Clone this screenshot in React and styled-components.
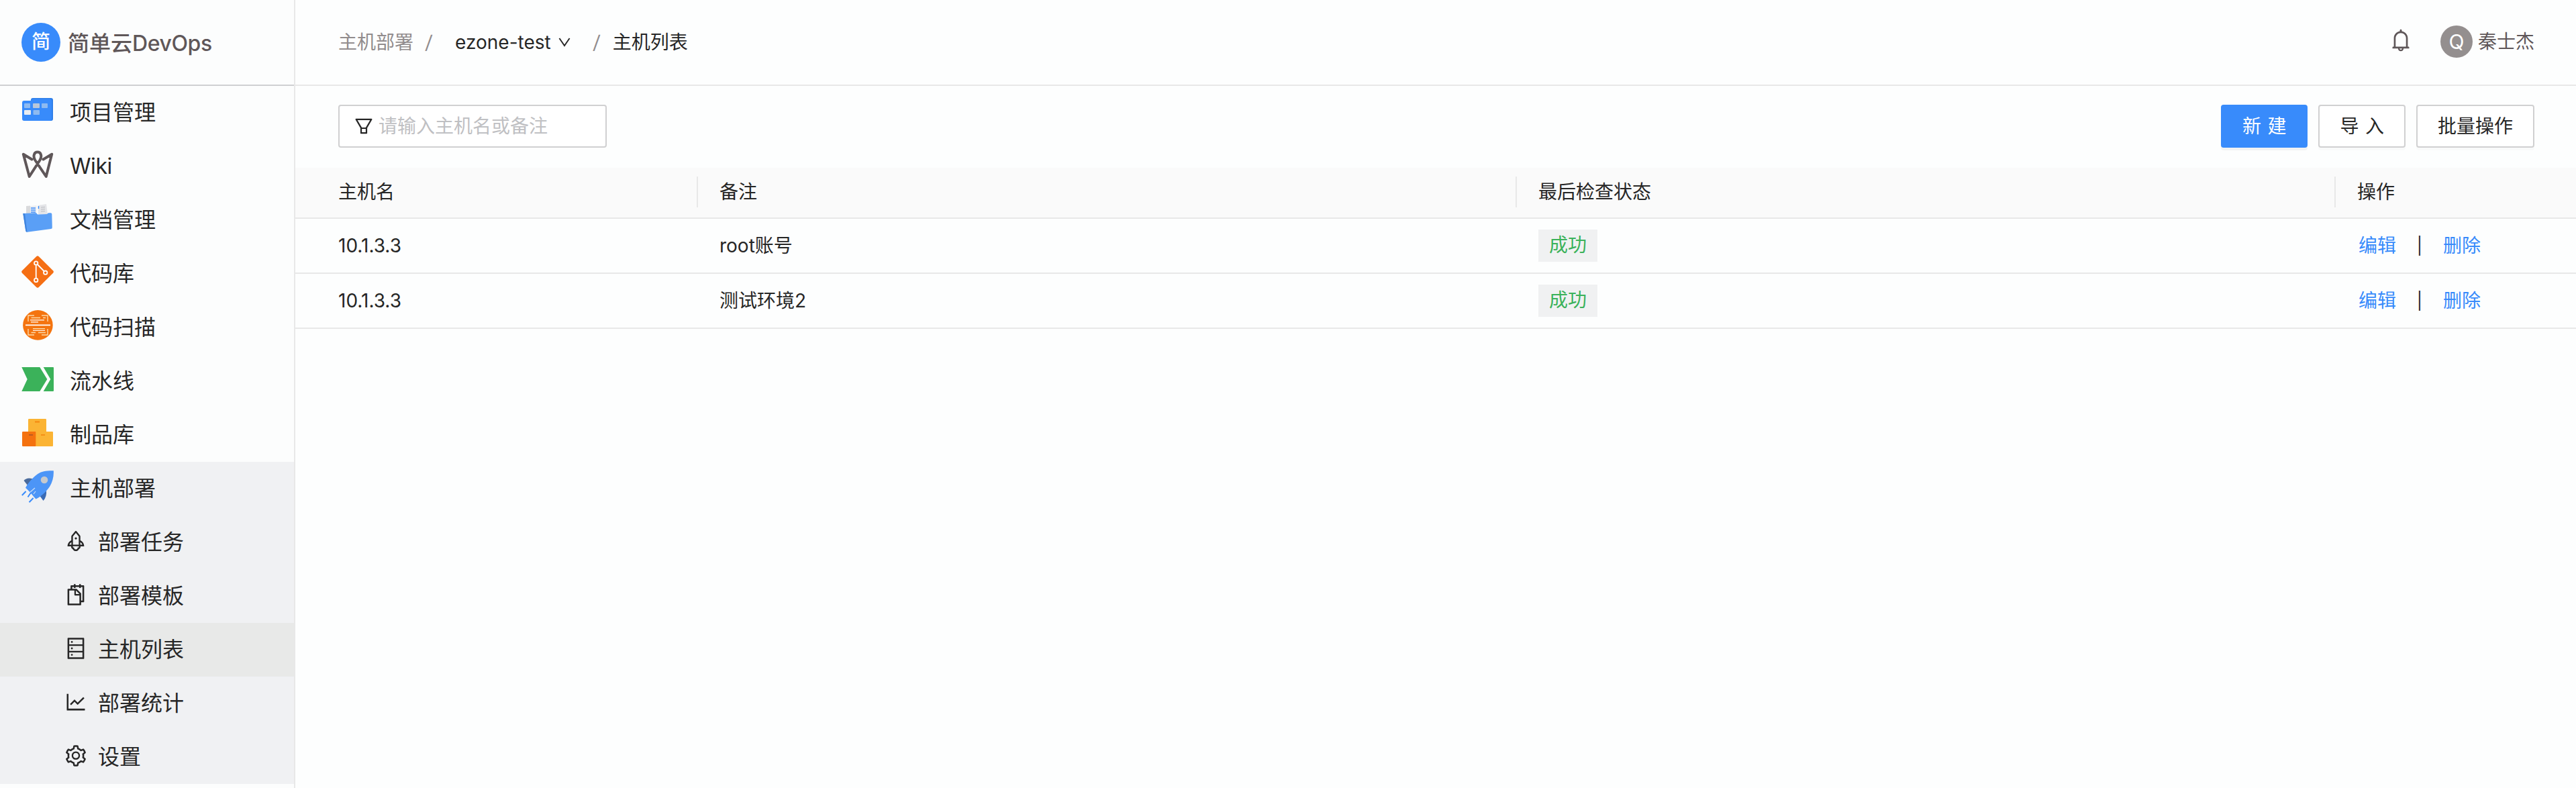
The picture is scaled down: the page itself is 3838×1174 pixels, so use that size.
import React from "react";
import styled, { createGlobalStyle, css } from "styled-components";
import {
  AiOutlineBell,
  AiOutlineDatabase,
  AiOutlineFilter,
  AiOutlineLineChart,
  AiOutlineRocket,
  AiOutlineSetting,
  AiOutlineSnippets,
} from "react-icons/ai";

const color = {
  primary: "#388bfb",
  text: "#262626",
  brown: "#5f5759",
  muted: "#918c8d",
  placeholder: "#bfc0c3",
  line: "#e8e8e8",
  control: "#d0d0d1",
  green: "#3bb25a",
};

const GlobalStyle = createGlobalStyle`
  * { box-sizing: border-box; }
  body {
    margin: 0;
    background: #fdfefe;
    color: ${color.text};
    font-family: Inter, "Noto Sans CJK SC", sans-serif;
    font-size: 28px;
    line-height: 44px;
  }
  svg { display: block; flex: none; }
`;

const Page = styled.div`
  display: grid;
  grid-template-columns: 440px 1fr;
  height: 1174px;
  overflow: hidden;
`;

const Sidebar = styled.aside`
  background: #fcfdfd;
  border-right: 2px solid ${color.line};
`;

const Brand = styled.div`
  height: 128px;
  display: flex;
  align-items: center;
  gap: 11px;
  padding-left: 32px;
  border-bottom: 2px solid #cfcfd2;
`;

const BrandMark = styled.div`
  width: 58px;
  height: 58px;
  border-radius: 50%;
  background: ${color.primary};
  color: #fff;
  font-size: 28px;
  font-weight: 500;
  line-height: 56px;
  text-align: center;
`;

const BrandName = styled.div`
  color: ${color.brown};
  font-size: 32px;
  font-weight: 500;
  padding-top: 4px;
`;

const Latin = styled.span`
  letter-spacing: -0.013em;
`;

const NavItem = styled.div`
  height: 80px;
  display: flex;
  align-items: center;
  gap: 24px;
  padding-left: 32px;
  font-size: 32px;

  svg { margin-bottom: 6px; }
`;

const NavGroup = styled.div`
  background: #f0f1f3;
`;

const SubItem = styled.div`
  height: 80px;
  display: flex;
  align-items: center;
  gap: 15px;
  padding-left: 95px;
  font-size: 32px;
  background: ${(p) => (p.$active ? "#e8e9e8" : "transparent")};

  svg { margin-bottom: 4px; }
`;

const Main = styled.main`
  min-width: 0;
`;

const TopBar = styled.header`
  height: 128px;
  display: flex;
  align-items: center;
  justify-content: space-between;
  padding: 0 62px 2px 64px;
  border-bottom: 2px solid ${color.line};
`;

const Crumbs = styled.nav`
  display: flex;
  align-items: center;
  padding-top: 2px;
`;

const Crumb = styled.span`
  color: ${(p) => (p.$muted ? color.muted : color.text)};
`;

const Slash = styled.span`
  width: 14px;
  margin: 0 ${(p) => p.$after}px 0 16px;
  color: ${color.muted};
  text-align: center;
  transform: skewX(-5deg);
`;

const Picker = styled.span`
  display: flex;
  align-items: center;
  gap: 11px;
  padding-right: 16px;
`;

const Account = styled.div`
  display: flex;
  align-items: center;
  color: ${color.brown};
`;

const BellIcon = styled(AiOutlineBell)`
  margin-bottom: 4px;
`;

const Avatar = styled.div`
  width: 48px;
  height: 48px;
  margin: 0 8px 0 40px;
  border-radius: 50%;
  background: #948f8f;
  color: #fff;
  font-size: 30px;
  line-height: 48px;
  text-align: center;
`;

const Toolbar = styled.div`
  height: 122px;
  display: flex;
  align-items: center;
  justify-content: space-between;
  padding: 0 62px 2px 64px;
`;

const Search = styled.div`
  width: 400px;
  height: 64px;
  display: flex;
  align-items: center;
  gap: 6px;
  padding-left: 20px;
  border: 2px solid ${color.control};
  border-radius: 4px;
  background: #fff;
`;

const Placeholder = styled.span`
  color: ${color.placeholder};
`;

const Actions = styled.div`
  display: flex;
  gap: 16px;
`;

const Button = styled.button`
  height: 64px;
  padding: 0 30px;
  border: 2px solid ${color.control};
  border-radius: 4px;
  background: #fff;
  color: ${color.text};
  font: inherit;
  white-space: nowrap;
  box-shadow: 0 4px 0 rgba(0, 0, 0, 0.016);

  span {
    letter-spacing: ${(p) => (p.$spaced ? "0.34em" : "0")};
    margin-right: ${(p) => (p.$spaced ? "-0.34em" : "0")};
  }

  ${(p) =>
    p.$primary &&
    css`
      border-color: ${color.primary};
      background: ${color.primary};
      color: #fff;
      box-shadow: 0 4px 0 rgba(0, 0, 0, 0.045);
    `}
`;

const ROW = css`
  display: grid;
  grid-template-columns: 600px 1220px 1220px 1fr;
  align-items: center;
  border-bottom: 2px solid ${color.line};
`;

const HeadRow = styled.div`
  ${ROW}
  height: 76px;
  background: #fafafa;
`;

const HeadCell = styled.div`
  height: 46px;
  line-height: 46px;
  margin-bottom: 2px;
  padding-left: ${(p) => (p.$first ? 64 : 32)}px;
  border-right: ${(p) => (p.$last ? "0" : "2px")} solid ${color.line};
`;

const Row = styled.div`
  ${ROW}
  height: 82px;
`;

const Cell = styled.div`
  display: flex;
  align-items: center;
  padding-left: ${(p) => (p.$first ? 64 : p.$links ? 34 : 32)}px;
`;

const Tag = styled.span`
  height: 48px;
  padding: 0 16px;
  line-height: 46px;
  background: #f0f1f2;
  color: ${color.green};
`;

const Link = styled.a`
  color: ${color.primary};
`;

const Bar = styled.span`
  width: 70px;
  font-size: 25px;
  text-align: center;
`;

const ChevronIcon = () => (
  <svg width="18" height="14" viewBox="0 0 18 14" fill="none" stroke={color.text} strokeWidth="1.9">
    <path d="M1.4 1L9 12L16.6 1" />
  </svg>
);

const ProjectIcon = () => (
  <svg width="48" height="48" viewBox="0 0 48 48">
    <rect x="14" y="5" width="33" height="34" rx="3" fill="#2f7fe8" />
    <path d="M4 9H13Q14.5 9 15.5 7.8Q16.5 6.6 18 6.6H42Q45 6.6 45 9.6V36Q45 39 42 39H4Q1 39 1 36V12Q1 9 4 9Z" fill="#388bfb" />
    <rect x="4" y="13" width="9" height="7" rx="1" fill="#8ebaf0" />
    <rect x="17" y="13" width="10" height="7" rx="1" fill="#b9c7d9" />
    <rect x="30" y="13" width="9" height="7" rx="1" fill="#8ebaf0" />
    <rect x="4" y="23" width="10" height="7" rx="1" fill="#e9edf1" />
    <rect x="17.5" y="23" width="9.5" height="7" rx="1" fill="#8ebaf0" />
  </svg>
);

const WikiIcon = () => (
  <svg width="48" height="48" viewBox="0 0 48 48" fill="none" stroke={color.brown} strokeWidth="4" strokeLinecap="round" strokeLinejoin="round">
    <path d="M15.5 16.5L2.8 8.8L11.7 42L27.5 17.5C31 11.5 29 5.6 23.9 5.6C18.8 5.6 16.8 11.5 20.2 17.5L36.7 42L45.2 8.8L32.4 16.5" />
  </svg>
);

const DocsIcon = () => (
  <svg width="48" height="48" viewBox="0 0 48 48">
    <path d="M7 6L13 5.5V18H7Z" fill="#d9dadc" />
    <path d="M13 6L22.5 5V18H13Z" fill="#eceef1" />
    <path d="M24.5 5L37 3L39 18H25Z" fill="#e4e5e8" />
    <path d="M14 9H21M14 12H21M14 15H21M25.5 6V10" stroke="#388bfb" strokeWidth="1.4" />
    <path d="M29 8L35 7.5M29 11L35 10.5M29 14L35 13.5" stroke="#b9bbc0" strokeWidth="1" />
    <path d="M2.3 17L22 16.3L24 18.5L38 18L40 16.3H43.5Q45.3 16.3 45.3 18L45.8 38Q45.8 39.8 44 40L8.5 44.7Q6.6 44.8 6.3 43Z" fill="#5a9ff6" />
    <path d="M2.3 17L5 17L8.5 44.7Q6.6 44.8 6.3 43Z" fill="#3f84dd" />
  </svg>
);

const RepoIcon = () => (
  <svg width="48" height="48" viewBox="0 0 48 48">
    <path d="M22.3 .9Q24 -.6 25.7 .9L47.1 22.3Q48.6 24 47.1 25.7L25.7 47.1Q24 48.6 22.3 47.1L.9 25.7Q-.6 24 .9 22.3Z" fill="#f56f14" />
    <g fill="none" stroke="#fff" strokeWidth="1.8">
      <path d="M21.7 14V33.5M23.8 13L33.6 23" />
      <circle cx="21.7" cy="11" r="2.7" />
      <circle cx="35.7" cy="25.2" r="2.7" />
      <circle cx="21.7" cy="36.4" r="2.7" />
    </g>
  </svg>
);

const ScanIcon = () => (
  <svg width="48" height="48" viewBox="0 0 48 48">
    <circle cx="24.4" cy="23.4" r="22.3" fill="#f4740f" />
    <g fill="none" stroke="#fbd9a8" strokeWidth="1.4">
      <path d="M19 9H10V18M30 9H39V18M10 29V38H19M39 29V38H30" />
      <path d="M14.5 12.5H28M32 12.5H36M17 28.8H35M14.5 34.5H21M25 34.5H36" />
    </g>
    <path d="M13 15.8H34M14 18.8H25M17 31.5H35" stroke="#fff" strokeWidth="1.2" />
    <path d="M6 23.4H43" stroke="#fff" strokeWidth="1.8" />
  </svg>
);

const PipelineIcon = () => (
  <svg width="48" height="48" viewBox="0 0 48 48" fill="#3bb25a">
    <path d="M.3 6H27.3L38.3 24L27.3 42H.3L8.7 24Z" />
    <path d="M32.7 6H47Q48 6 48 7V41Q48 42 47 42H32.7L43.3 24Z" />
  </svg>
);

const ArtifactIcon = () => (
  <svg width="48" height="48" viewBox="0 0 48 48">
    <rect x="10" y="3" width="27" height="20" rx="1.2" fill="#fbb434" />
    <rect x="1" y="22" width="21" height="22" rx="1.2" fill="#f4720f" />
    <path d="M21.3 22H46Q47 22 47 23V43Q47 44 46 44H21.3Z" fill="#fbb434" />
    <path d="M20 7.5H27" stroke="#f4870f" strokeWidth="2" />
    <path d="M29 27H35" stroke="#f4870f" strokeWidth="1.6" />
    <path d="M11 27H17" stroke="#a3542a" strokeWidth="1.4" />
  </svg>
);

const DeployIcon = () => (
  <svg width="48" height="48" viewBox="0 0 48 48">
    <path d="M17 12.5Q8 9.5 3.5 15L9 22Z" fill="#4a6b9c" />
    <path d="M37 30Q38 39 32.5 45L27.5 38Z" fill="#3a6bb5" />
    <path d="M47.8 .2C38 0 30 .8 24 5.2C17 10.5 10 18 6 25.7C8.5 28 11 30 13 33C16 36 18.5 39.5 21.5 42.5C29 39 37 31.5 42 24C46.5 16.5 48.3 9 47.8 .2Z" fill="#4c95f7" />
    <circle cx="34" cy="14" r="5.3" fill="#c6c9cd" />
    <path d="M12 33L20 26M18 35L21 31" stroke="#cfe0f7" strokeWidth="1.2" />
    <path d="M6.6 31L.8 37M14 33L9.5 39.5M17.6 41L11.5 47.2" stroke={color.primary} strokeWidth="2" />
  </svg>
);

const NAV = [
  ["项目管理", ProjectIcon],
  ["Wiki", WikiIcon],
  ["文档管理", DocsIcon],
  ["代码库", RepoIcon],
  ["代码扫描", ScanIcon],
  ["流水线", PipelineIcon],
  ["制品库", ArtifactIcon],
];

const SUB_NAV = [
  ["部署任务", AiOutlineRocket],
  ["部署模板", AiOutlineSnippets],
  ["主机列表", AiOutlineDatabase],
  ["部署统计", AiOutlineLineChart],
  ["设置", AiOutlineSetting],
];

const HOSTS = [
  { id: 1, host: "10.1.3.3", note: "root账号", status: "成功" },
  { id: 2, host: "10.1.3.3", note: "测试环境2", status: "成功" },
];

export default function App() {
  return (
    <>
      <GlobalStyle />
      <Page>
        <Sidebar>
          <Brand>
            <BrandMark>简</BrandMark>
            <BrandName>
              简单云<Latin>DevOps</Latin>
            </BrandName>
          </Brand>
          {NAV.map(([label, Icon]) => (
            <NavItem key={label}>
              <Icon />
              {label === "Wiki" ? <Latin>{label}</Latin> : label}
            </NavItem>
          ))}
          <NavGroup>
            <NavItem>
              <DeployIcon />
              主机部署
            </NavItem>
            {SUB_NAV.map(([label, Icon]) => (
              <SubItem key={label} $active={label === "主机列表"}>
                <Icon size={36} />
                {label}
              </SubItem>
            ))}
          </NavGroup>
        </Sidebar>
        <Main>
          <TopBar>
            <Crumbs>
              <Crumb $muted>主机部署</Crumb>
              <Slash $after={32}>/</Slash>
              <Picker>
                <Crumb>ezone-test</Crumb>
                <ChevronIcon />
              </Picker>
              <Slash $after={17}>/</Slash>
              <Crumb>主机列表</Crumb>
            </Crumbs>
            <Account>
              <BellIcon size={38} />
              <Avatar>Q</Avatar>
              秦士杰
            </Account>
          </TopBar>
          <Toolbar>
            <Search>
              <AiOutlineFilter size={32} />
              <Placeholder>请输入主机名或备注</Placeholder>
            </Search>
            <Actions>
              <Button $primary $spaced>
                <span>新建</span>
              </Button>
              <Button $spaced>
                <span>导入</span>
              </Button>
              <Button>
                <span>批量操作</span>
              </Button>
            </Actions>
          </Toolbar>
          <HeadRow>
            <HeadCell $first>主机名</HeadCell>
            <HeadCell>备注</HeadCell>
            <HeadCell>最后检查状态</HeadCell>
            <HeadCell $last>操作</HeadCell>
          </HeadRow>
          {HOSTS.map((h) => (
            <Row key={h.id}>
              <Cell $first>{h.host}</Cell>
              <Cell>{h.note}</Cell>
              <Cell>
                <Tag>{h.status}</Tag>
              </Cell>
              <Cell $links>
                <Link>编辑</Link>
                <Bar>|</Bar>
                <Link>删除</Link>
              </Cell>
            </Row>
          ))}
        </Main>
      </Page>
    </>
  );
}
